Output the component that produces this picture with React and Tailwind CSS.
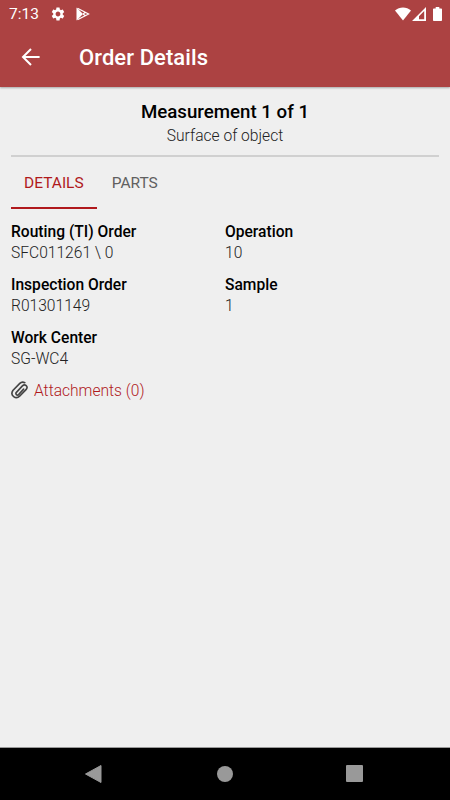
import React, { useState } from "react";
import { MdSettings } from "react-icons/md";

const fields = [
  { label: "Routing (TI) Order", value: "SFC011261 \\ 0" },
  { label: "Operation", value: "10" },
  { label: "Inspection Order", value: "R01301149" },
  { label: "Sample", value: "1" },
  { label: "Work Center", value: "SG-WC4" },
];

function StatusBar() {
  return (
    <div className="flex h-7 items-center pl-[9px] pr-2 text-white">
      <span className="pt-[2px] text-[15.5px] leading-none">7:13</span>
      <MdSettings className="ml-[11px] size-4" />
      <svg className="ml-[10px] h-[14px] w-[14px]" viewBox="0 0 14 14">
        <path d="M0.5 0.5 L0.5 13.5 L7 7 Z" fill="currentColor" />
        <path
          d="M1.5 1.3 L12.6 7 L1.5 12.7 M7 7 L9.6 5.3 M7 7 L9.6 8.7"
          fill="none"
          stroke="currentColor"
          strokeWidth="1.2"
        />
      </svg>

      <div className="ml-auto flex items-center">
        <svg className="h-[14px] w-[18px]" viewBox="0 0 18 14">
          <path d="M1 3.6 C5.5 -0.4 12.5 -0.4 17 3.6 L9 13.6 Z" fill="currentColor" />
        </svg>
        <svg className="h-[14px] w-[14px]" viewBox="0 0 14 14">
          <path
            d="M14 0 L14 14 L0 14 Z M12.2 4 L7 9.2 L7 12.2 L12.2 12.2 Z"
            fill="currentColor"
            fillRule="evenodd"
          />
        </svg>
        <svg className="ml-[7px] h-[14px] w-[9px]" viewBox="0 0 9 14">
          <path d="M2.7 0 H6.3 V1.4 H8.2 Q9 1.4 9 2.2 V13.2 Q9 14 8.2 14 H0.8 Q0 14 0 13.2 V2.2 Q0 1.4 0.8 1.4 H2.7 Z" fill="currentColor" />
        </svg>
      </div>
    </div>
  );
}

function Header() {
  return (
    <header className="h-[87px] bg-[#ac4242] shadow-[0_1px_2px_rgba(0,0,0,0.3)]">
      <StatusBar />
      <div className="flex h-[59px] items-center pl-[21px] text-white">
        <button aria-label="Back">
          <svg className="mb-[2px] h-[18px] w-5" viewBox="0 0 20 18">
            <path
              d="M10 1 L2 9 L10 17 M2 9 H18.6"
              fill="none"
              stroke="currentColor"
              strokeWidth="2"
            />
          </svg>
        </button>
        <h1 className="ml-[38px] text-[22px] leading-none font-medium tracking-[0.08px]">Order Details</h1>
      </div>
    </header>
  );
}

function Tab({ active, onClick, children }) {
  return (
    <button
      onClick={onClick}
      className={`border-b-2 px-[13px] pb-[14px] text-[15.5px] leading-5 ${
        active ? "border-[#b0191c] text-[#b0191c]" : "ml-[2px] border-transparent text-[#606060]"
      }`}
    >
      {children}
    </button>
  );
}

function NavBar() {
  return (
    <nav className="flex h-[53px] items-center border-t border-[#999] bg-black pb-px text-[#999]">
      <svg className="ml-[85px] h-[18px] w-[17px]" viewBox="0 0 17 18">
        <path d="M0.5 9 L16 0.5 L16 17.5 Z" fill="currentColor" stroke="currentColor" strokeLinejoin="round" />
      </svg>
      <div className="ml-[115px] size-4 rounded-full bg-[#999]" />
      <div className="ml-[113px] size-[17px] rounded-[1px] bg-[#999]" />
    </nav>
  );
}

function App() {
  const [tab, setTab] = useState("details");

  return (
    <div className="flex h-[800px] w-[450px] flex-col bg-[#efefef] font-[Roboto,sans-serif]">
      <Header />

      <main className="flex-1 px-[11px] pt-[13px]">
        <div className="h-[57px] border-b-2 border-[#d0d0d0] text-center">
          <h2 className="text-[18.7px] leading-6 font-medium text-black">Measurement 1 of 1</h2>
          <p className="text-[15.6px] leading-[25px] font-light text-[#222]">Surface of object</p>
        </div>

        <div className="flex pt-4">
          <Tab active={tab === "details"} onClick={() => setTab("details")}>DETAILS</Tab>
          <Tab active={tab === "parts"} onClick={() => setTab("parts")}>PARTS</Tab>
        </div>

        {tab === "details" && (
          <div>
            <dl className="grid grid-cols-2 gap-y-[11px] pt-[13px]">
              {fields.map((field) => (
                <div key={field.label}>
                  <dt className="text-[15.6px] leading-[21px] font-medium text-black">{field.label}</dt>
                  <dd className="text-[15.6px] leading-[21px] font-light text-[#222]">{field.value}</dd>
                </div>
              ))}
            </dl>
            <button className="mt-[11px] flex items-center text-[#b0191c]">
              <svg className="mb-[3px] h-[18px] w-[18px] text-[#444]" viewBox="0 0 18 18">
                <path
                  d="M12.6 8.1 L7.6 13.6 C6.1 15.1 4 12.9 5.4 11.4 L11.4 4.9 C14 2.3 17.6 5.4 15.2 8.4 L8.6 15.2 C5 18.6 -1.4 14.8 1.9 9.5 L8.8 2.4 C10 1.2 12.2 0.8 13.8 1.7"
                  fill="none"
                  stroke="currentColor"
                  strokeWidth="1.6"
                  strokeLinecap="round"
                />
              </svg>
              <span className="ml-[5px] text-[15.6px] leading-[21px] font-light">Attachments (0)</span>
            </button>
          </div>
        )}
      </main>

      <NavBar />
    </div>
  );
}

export default App;
